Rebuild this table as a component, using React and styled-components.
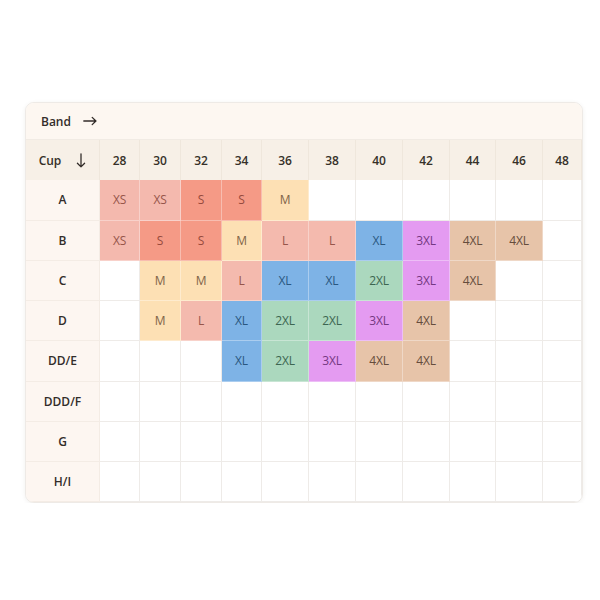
import React from "react";
import styled, { createGlobalStyle } from "styled-components";

const GlobalStyle = createGlobalStyle`
  body {
    margin: 0;
    background: #ffffff;
    font-family: "Open Sans", "Liberation Sans", sans-serif;
  }
`;

const bands = [28, 30, 32, 34, 36, 38, 40, 42, 44, 46, 48];

const rows = [
  { cup: "A", sizes: ["XS", "XS", "S", "S", "M"] },
  { cup: "B", sizes: ["XS", "S", "S", "M", "L", "L", "XL", "3XL", "4XL", "4XL"] },
  { cup: "C", sizes: ["", "M", "M", "L", "XL", "XL", "2XL", "3XL", "4XL"] },
  { cup: "D", sizes: ["", "M", "L", "XL", "2XL", "2XL", "3XL", "4XL"] },
  { cup: "DD/E", sizes: ["", "", "", "XL", "2XL", "3XL", "4XL", "4XL"] },
  { cup: "DDD/F", sizes: [] },
  { cup: "G", sizes: [] },
  { cup: "H/I", sizes: [] }
];

const palette = {
  XS: { bg: "#f4b9ae", fg: "#96554a" },
  S: { bg: "#f59a86", fg: "#964a3d" },
  M: { bg: "#fde0b4", fg: "#7f6448" },
  L: { bg: "#f4baae", fg: "#96554a" },
  XL: { bg: "#7eb3e6", fg: "#2a5780" },
  "2XL": { bg: "#abd8be", fg: "#3c6651" },
  "3XL": { bg: "#e49bf1", fg: "#743882" },
  "4XL": { bg: "#e7c4a9", fg: "#654c3c" }
};

const Page = styled.div`
  padding: 102px 17px 0 25px;
`;

const Card = styled.div`
  width: 558px;
  border: 1px solid #eeeae6;
  border-radius: 9px;
  overflow: hidden;
  background: #ffffff;
  box-shadow: 0 1px 4px rgba(80, 60, 40, 0.08);
  box-sizing: border-box;
`;

const BandBar = styled.div`
  height: 37px;
  display: flex;
  align-items: center;
  gap: 12px;
  padding-left: 15px;
  background: #fdf7f1;
  border-bottom: 1px solid #f1ebe4;
  box-sizing: border-box;
  font-size: 12px;
  font-weight: 600;
  color: #332d2a;
`;

const Grid = styled.div`
  display: grid;
  grid-template-columns: 74px 40px 41px 41px 40px 47px 47px 47px 47px 46px 47px 1fr;
  grid-auto-rows: 40.25px;
`;

const Cell = styled.div`
  display: flex;
  align-items: center;
  justify-content: center;
  gap: ${p => p.$gap || 0}px;
  box-sizing: border-box;
  font-size: 12px;
  border-right: 1px solid ${p => p.$line || "#eeebe8"};
  border-bottom: 1px solid ${p => p.$line || "#eeebe8"};
`;

const HeadCell = styled(Cell)`
  height: 41px;
  background: #f7f0e7;
  font-weight: 600;
  color: #363029;
  border-color: #efe7dc;
`;

const CupCell = styled(Cell)`
  background: #fdf6f1;
  font-weight: 600;
  color: #332d2a;
  border-color: #f4ece5;
`;

const SizeCell = styled(Cell)`
  background: ${p => p.$bg || "#ffffff"};
  color: ${p => p.$fg || "#444"};
  font-weight: 400;
  letter-spacing: -0.2px;
`;

const RightArrow = () => (
  <svg width="14" height="10" viewBox="0 0 14 10" fill="none" stroke="#332d2a" strokeWidth="1.3" strokeLinecap="round" strokeLinejoin="round">
    <path d="M0.8 5h12.2M9.2 1.4L12.9 5 9.2 8.6" />
  </svg>
);

const DownArrow = () => (
  <svg width="10" height="15" viewBox="0 0 10 15" fill="none" stroke="#332d2a" strokeWidth="1.3" strokeLinecap="round" strokeLinejoin="round">
    <path d="M5 0.8v13M1.4 10.2L5 13.9 8.6 10.2" />
  </svg>
);

const SizeChart = () => (
  <Card>
    <BandBar>
      Band
      <RightArrow />
    </BandBar>
    <Grid>
      <HeadCell $gap={15}>
        Cup
        <DownArrow />
      </HeadCell>
      {bands.map(b => (
        <HeadCell key={b}>{b}</HeadCell>
      ))}
      {rows.map(row => (
        <React.Fragment key={row.cup}>
          <CupCell>{row.cup}</CupCell>
          {bands.map((b, i) => {
            const size = row.sizes[i];
            const c = size ? palette[size] : null;
            return (
              <SizeCell
                key={b}
                $bg={c && c.bg}
                $fg={c && c.fg}
                $line={c ? "rgba(255,255,255,0.35)" : null}
              >
                {size}
              </SizeCell>
            );
          })}
        </React.Fragment>
      ))}
    </Grid>
  </Card>
);

export default function App() {
  return (
    <>
      <GlobalStyle />
      <Page>
        <SizeChart />
      </Page>
    </>
  );
}
